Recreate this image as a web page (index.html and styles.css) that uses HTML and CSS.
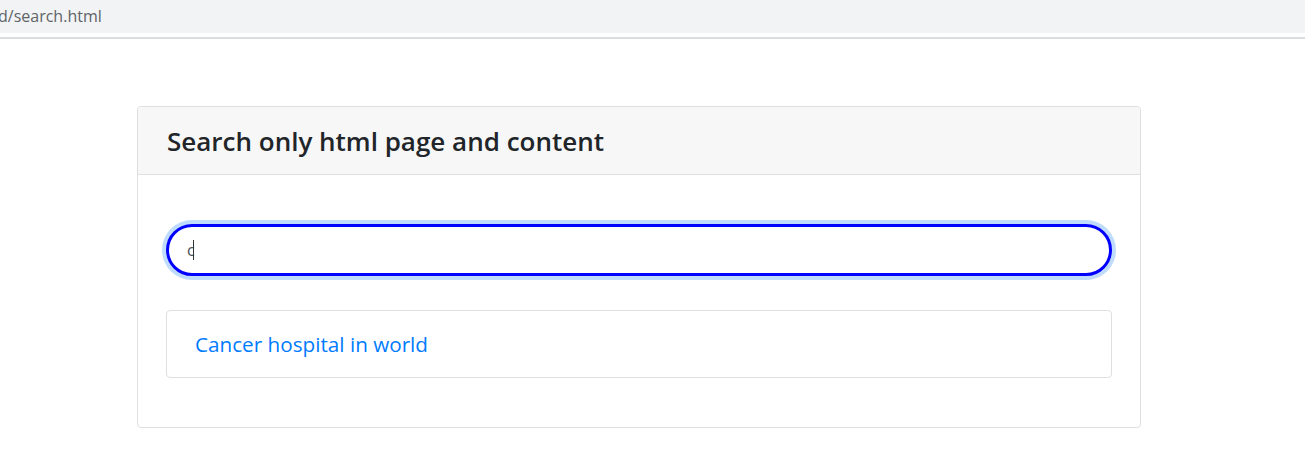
FILE: index.html
```html
<!DOCTYPE html>
<html>
<head>
<meta charset="utf-8">
<link rel="stylesheet" href="styles.css">
</head>
<body>
<div class="chrome">
  <div class="url">d/search.html</div>
</div>
<div class="page">
  <div class="card">
    <div class="card-header"><h4>Search only html page and content</h4></div>
    <div class="card-body">
      <div class="search"><span class="typed">c</span><span class="caret"></span></div>
      <ul class="results">
        <li class="result"><a href="#">Cancer hospital in world</a></li>
      </ul>
    </div>
  </div>
</div>
</body>
</html>
```
FILE: styles.css
```css
html, body {
  margin: 0;
  padding: 0;
  background: #fff;
  font-family: "Open Sans", "Noto Sans", sans-serif;
}
.chrome {
  height: 33px;
  background: #f1f3f4;
  border-bottom: 4px solid #fff;
  box-shadow: 0 2px 0 #dadce0;
  display: flex;
  align-items: center;
}
.url {
  margin-left: -2px;
  font-size: 16px;
  color: #5f6368;
  margin-top: -2px;
}
.page {
  padding-top: 69px;
  padding-left: 137px;
  width: 1004px;
}
.card {
  border: 1px solid #dfdfdf;
  border-radius: 4px;
  box-sizing: border-box;
  height: 322px;
}
.card-header {
  background: #f7f7f7;
  border-bottom: 1px solid #dfdfdf;
  height: 68px;
  box-sizing: border-box;
  padding-left: 29px;
  display: flex;
  align-items: center;
  border-radius: 4px 4px 0 0;
}
.card-header h4 {
  margin: 0;
  font-size: 26px;
  font-weight: 600;
  color: #212529;
}
.card-body {
  padding: 49px 28px 0 28px;
}
.search {
  height: 52px;
  box-sizing: border-box;
  border: 3px solid #0000ff;
  border-radius: 26px;
  box-shadow: 0 0 0 4px #c0dcfc;
  display: flex;
  align-items: center;
  padding-left: 18px;
  font-size: 16px;
  color: #495057;
}
.caret {
  display: inline-block;
  width: 1px;
  height: 20px;
  background: #333;
  margin-left: -2px;
}
.results {
  list-style: none;
  margin: 34px 0 0 0;
  padding: 0;
}
.result {
  border: 1px solid #dfdfdf;
  border-radius: 4px;
  height: 68px;
  box-sizing: border-box;
  display: flex;
  align-items: center;
  padding-left: 28px;
}
.result a {
  color: #007bff;
  text-decoration: none;
  font-size: 20.7px;
}
```
